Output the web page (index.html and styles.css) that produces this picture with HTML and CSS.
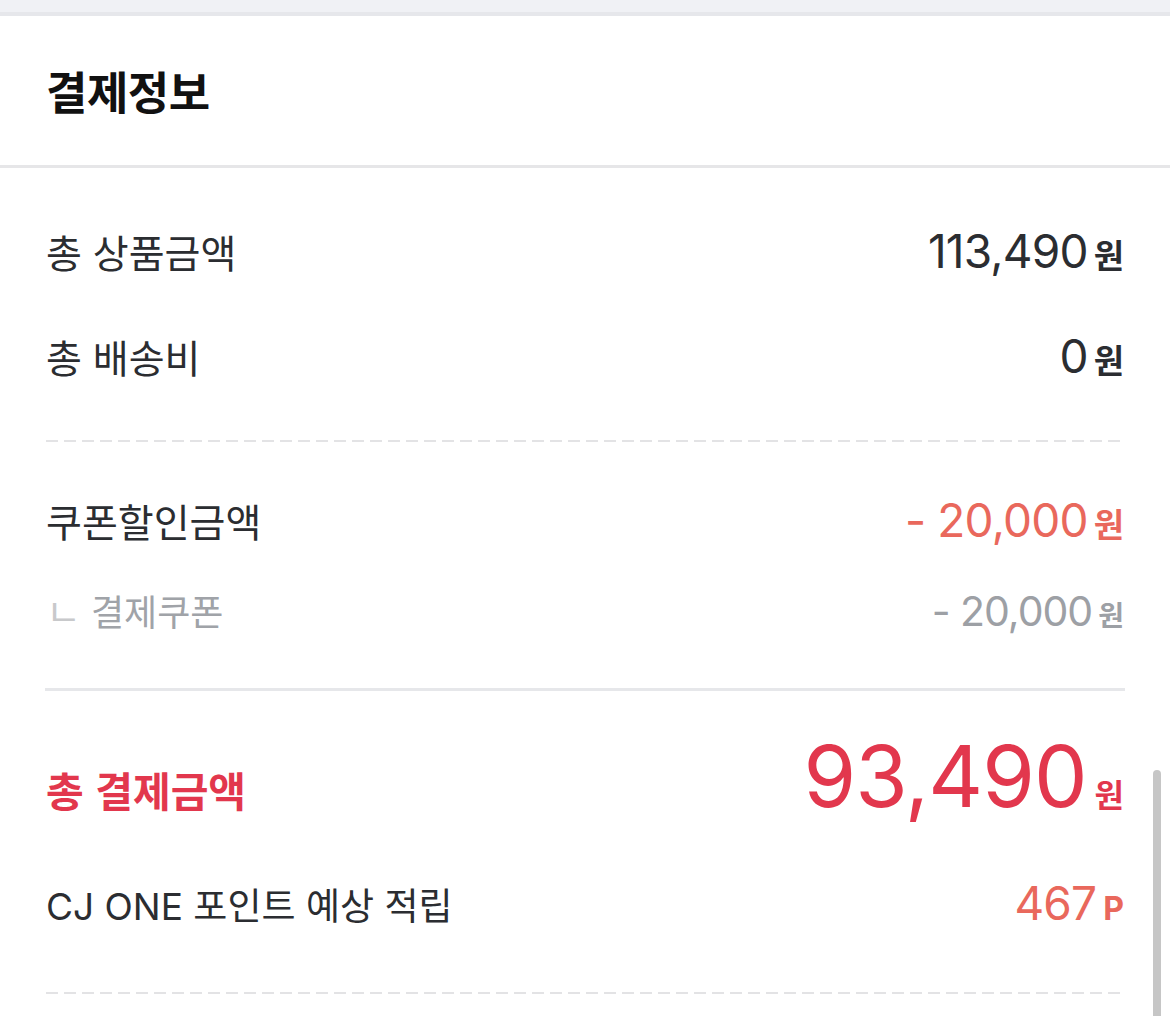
FILE: index.html
```html
<!DOCTYPE html>
<html lang="ko">
<head>
<meta charset="utf-8">
<title>결제정보</title>
<link rel="stylesheet" href="styles.css">
</head>
<body>
<div class="page">
  <div class="topbar"></div>
  <header class="header">
    <h1 class="title">결제정보</h1>
  </header>
  <main class="content">
    <section class="group group-sum">
      <div class="row">
        <span class="label">총 상품금액</span>
        <span class="value"><span class="num">113,490</span><span class="unit">원</span></span>
      </div>
      <div class="row row-ship">
        <span class="label">총 배송비</span>
        <span class="value"><span class="num">0</span><span class="unit">원</span></span>
      </div>
    </section>
    <div class="dashed"></div>
    <section class="group group-coupon">
      <div class="row">
        <span class="label">쿠폰할인금액</span>
        <span class="value discount"><span class="num">- 20,000</span><span class="unit">원</span></span>
      </div>
      <div class="row row-sub">
        <span class="label sub-label"><span class="sub-mark">ㄴ</span>결제쿠폰</span>
        <span class="value sub-value"><span class="num">- 20,000</span><span class="unit">원</span></span>
      </div>
    </section>
    <div class="solid"></div>
    <section class="group group-total">
      <div class="row row-total">
        <span class="label total-label">총 결제금액</span>
        <span class="value total-value"><span class="num">93,490</span><span class="unit">원</span></span>
      </div>
      <div class="row row-point">
        <span class="label point-label">CJ ONE 포인트 예상 적립</span>
        <span class="value point"><span class="num">467</span><span class="unit unit-p">P</span></span>
      </div>
    </section>
    <div class="dashed"></div>
  </main>
  <div class="scrollbar"></div>
</div>
</body>
</html>
```
FILE: styles.css
```css
html, body {
  margin: 0;
  padding: 0;
  background: #ffffff;
}
body {
  font-family: "Inter", "Noto Sans CJK KR", sans-serif;
  color: #2b2d31;
  overflow: hidden;
}
.page {
  position: relative;
  width: 1170px;
  height: 1016px;
  overflow: hidden;
}
.topbar {
  height: 12px;
  background: #f0f1f5;
  border-bottom: 4px solid #e6e7eb;
}
.header {
  height: 149px;
  display: flex;
  align-items: center;
  padding-left: 46px;
  border-bottom: 3px solid #e6e6e8;
}
.title {
  margin: 0;
  font-family: "Noto Sans CJK KR", sans-serif;
  font-size: 45px;
  font-weight: 700;
  color: #111111;
  letter-spacing: -0.5px;
}
.content {
  padding: 0 46px;
}
.row {
  display: flex;
  justify-content: space-between;
  align-items: baseline;
  height: 60px;
  line-height: 60px;
}
.label {
  font-family: "Noto Sans CJK KR", sans-serif;
  font-size: 39px;
  font-weight: 400;
  color: #2b2d31;
}
.point-label {
  font-family: "Inter", "Noto Sans CJK KR", sans-serif;
  font-size: 37px;
}
.value {
  display: flex;
  align-items: baseline;
  white-space: nowrap;
}
.num {
  font-family: "Inter", sans-serif;
  font-size: 46px;
  letter-spacing: -0.8px;
}
.unit {
  font-family: "Noto Sans CJK KR", sans-serif;
  font-size: 33px;
  font-weight: 700;
  margin-left: 6px;
}
.group-sum {
  padding: 53px 0 54px;
}
.row-ship {
  margin-top: 45px;
}
.dashed {
  height: 2px;
  background: repeating-linear-gradient(90deg, #e3e3e5 0 12px, transparent 12px 18px);
}
.group-coupon {
  padding: 48px 0 48px;
}
.discount {
  color: #e9685c;
}
.row-sub {
  margin-top: 30px;
}
.sub-label {
  font-size: 36px;
  color: #a0a3a8;
}
.sub-mark {
  color: #c8c9cb;
  font-size: 38px;
  margin-left: 0;
  margin-right: 10px;
}
.sub-value {
  color: #9da0a5;
}
.sub-value .num {
  font-size: 41px;
  letter-spacing: -1px;
}
.sub-value .unit {
  font-size: 28px;
}
.solid {
  height: 3px;
  margin: 0 -1px;
  background: #e6e7ea;
}
.group-total {
  padding: 36px 0 59px;
}
.row-total {
  height: 101px;
  line-height: 100px;
}
.total-label {
  font-size: 41px;
  font-weight: 700;
  color: #e2374d;
}
.total-value {
  color: #e2374d;
}
.total-value .num {
  font-size: 85px;
  letter-spacing: -1px;
}
.total-value .unit {
  font-size: 32px;
  margin-left: 8px;
}
.row-point {
  margin-top: 45px;
}
.point {
  color: #e9685c;
}
.unit-p {
  font-family: "Inter", sans-serif;
  font-size: 32px;
  font-weight: 700;
  margin-left: 7px;
}
.scrollbar {
  position: absolute;
  right: 9px;
  top: 770px;
  width: 8px;
  height: 270px;
  border-radius: 4px;
  background: #c6c6c6;
}
```
